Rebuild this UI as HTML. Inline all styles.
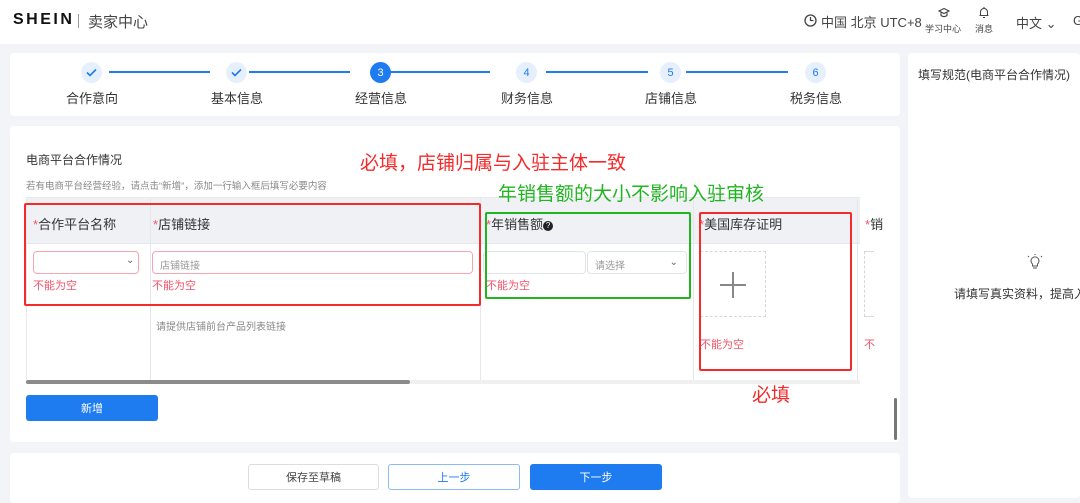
<!DOCTYPE html>
<html><head><meta charset="utf-8"><style>
*{box-sizing:border-box;margin:0;padding:0}
body{width:1080px;height:498px;overflow:hidden;background:#f2f4f8;font-family:"Liberation Sans","Noto Sans CJK SC",sans-serif;position:relative;color:#333}
.a{position:absolute}
.hdr{left:0;top:0;width:1080px;height:44px;background:#fff}
.card{background:#fff;border-radius:4px}
.circ{width:21px;height:21px;border-radius:50%;background:#e6f0fd;color:#1f7bf0;font-size:11px;display:flex;align-items:center;justify-content:center}
.line{height:2px;background:#1f7bf0;top:71px}
.lbl{font-size:13px;color:#333;top:88px;width:80px;text-align:center}
.err{color:#f2556b;font-size:11px}
.ann{font-size:19px}
.btn{height:26px;border-radius:3px;font-size:11px;display:flex;align-items:center;justify-content:center}
</style></head><body>
<div class="a hdr"></div>
<div class="a" style="left:13px;top:11px;font-size:16px;font-weight:bold;letter-spacing:2.5px;color:#111">SHEIN</div>
<div class="a" style="left:78px;top:14px;width:1px;height:14px;background:#999"></div>
<div class="a" style="left:88px;top:11px;font-size:15px;color:#444">卖家中心</div>
<svg class="a" style="left:804px;top:14px" width="13" height="13" viewBox="0 0 13 13"><circle cx="6.5" cy="6.5" r="5.5" fill="none" stroke="#444" stroke-width="1.3"/><path d="M6.5 3v3.5h3" fill="none" stroke="#444" stroke-width="1.3"/></svg>
<div class="a" style="left:821px;top:12px;font-size:13px;color:#444">中国 北京 UTC+8</div>
<svg class="a" style="left:938px;top:7px" width="12" height="11" viewBox="0 0 12 11"><path d="M1 4l5-2.5 5 2.5-5 2.5z M3 5v3.5c2 1.5 4 1.5 6 0V5" fill="none" stroke="#444" stroke-width="1.1"/></svg>
<div class="a" style="left:925px;top:22px;font-size:9px;color:#444">学习中心</div>
<svg class="a" style="left:978px;top:6px" width="12" height="13" viewBox="0 0 12 13"><path d="M2.5 9.5V6a3.5 3.5 0 017 0v3.5H2.5h7M1.5 9.5h9M5 11.5h2M6 1v1.2" fill="none" stroke="#444" stroke-width="1.1"/></svg>
<div class="a" style="left:975px;top:22px;font-size:9px;color:#444">消息</div>
<div class="a" style="left:1016px;top:13px;font-size:13px;color:#444">中文 ⌄</div>
<div class="a" style="left:1073px;top:13px;font-size:13px;color:#444">G</div>

<div class="a card" style="left:10px;top:53px;width:890px;height:63px"></div>
<div class="a circ" style="left:81px;top:62px"><svg width="11" height="9" viewBox="0 0 11 9"><path d="M1 4.5l3 3L10 1.5" fill="none" stroke="#1f7bf0" stroke-width="1.6"/></svg></div>
<div class="a circ" style="left:226px;top:62px"><svg width="11" height="9" viewBox="0 0 11 9"><path d="M1 4.5l3 3L10 1.5" fill="none" stroke="#1f7bf0" stroke-width="1.6"/></svg></div>
<div class="a circ" style="left:370px;top:62px;background:#1f7bf0;color:#fff">3</div>
<div class="a circ" style="left:516px;top:62px">4</div>
<div class="a circ" style="left:660px;top:62px">5</div>
<div class="a circ" style="left:805px;top:62px">6</div>
<div class="a line" style="left:109px;width:101px"></div>
<div class="a line" style="left:249px;width:101px"></div>
<div class="a line" style="left:389px;width:101px"></div>
<div class="a line" style="left:546px;width:102px"></div>
<div class="a line" style="left:686px;width:102px"></div>
<div class="a lbl" style="left:52px">合作意向</div>
<div class="a lbl" style="left:197px">基本信息</div>
<div class="a lbl" style="left:341px">经营信息</div>
<div class="a lbl" style="left:487px">财务信息</div>
<div class="a lbl" style="left:631px">店铺信息</div>
<div class="a lbl" style="left:776px">税务信息</div>

<div class="a card" style="left:908px;top:53px;width:172px;height:445px"></div>
<div class="a" style="left:918px;top:66px;font-size:12px;color:#333">填写规范(电商平台合作情况)</div>
<svg class="a" style="left:1026px;top:253px" width="18" height="18" viewBox="0 0 18 18"><path d="M6.5 11a4 4 0 115 0v2h-5z M7 15h4 M9 2V1 M3 4l-1-1 M15 4l1-1" fill="none" stroke="#555" stroke-width="1"/></svg>
<div class="a" style="left:954px;top:285px;font-size:12px;color:#333;white-space:nowrap">请填写真实资料，提高入</div>

<div class="a card" style="left:10px;top:126px;width:890px;height:316px"></div>
<div class="a" style="left:26px;top:151px;font-size:12px;color:#333">电商平台合作情况</div>
<div class="a" style="left:26px;top:178px;font-size:9.5px;color:#888">若有电商平台经营经验，请点击“新增”，添加一行输入框后填写必要内容</div>

<div class="a" style="left:26px;top:197px;width:834px;height:184px;border:1px solid #e8e9ee;border-right:none"></div>
<div class="a" style="left:27px;top:198px;width:833px;height:46px;background:#f0f1f5;border-bottom:1px solid #e6e7ec"></div>
<div class="a" style="left:150px;top:198px;width:1px;height:182px;background:#e6e7ec"></div>
<div class="a" style="left:480px;top:198px;width:1px;height:182px;background:#e6e7ec"></div>
<div class="a" style="left:693px;top:198px;width:1px;height:182px;background:#e6e7ec"></div>
<div class="a" style="left:857px;top:198px;width:1px;height:182px;background:#e6e7ec"></div>
<div class="a" style="left:33px;top:214px;font-size:13px"><span style="color:#f2556b">*</span>合作平台名称</div>
<div class="a" style="left:153px;top:214px;font-size:13px"><span style="color:#f2556b">*</span>店铺链接</div>
<div class="a" style="left:486px;top:214px;font-size:13px"><span style="color:#f2556b">*</span>年销售额<span style="display:inline-block;width:10px;height:10px;border-radius:50%;background:#222;color:#fff;font-size:8px;line-height:10px;text-align:center;vertical-align:1px">?</span></div>
<div class="a" style="left:699px;top:214px;font-size:13px"><span style="color:#f2556b">*</span>美国库存证明</div>
<div class="a" style="left:865px;top:214px;font-size:13px"><span style="color:#f2556b">*</span>销</div>

<div class="a" style="left:33px;top:251px;width:106px;height:23px;border:1px solid #f7a4b0;border-radius:4px"></div>
<div class="a" style="left:126px;top:255px;font-size:10px;color:#666">⌄</div>
<div class="a" style="left:152px;top:251px;width:321px;height:23px;border:1px solid #f7a4b0;border-radius:4px;font-size:10px;color:#999;padding:5px 7px">店铺链接</div>
<div class="a err" style="left:33px;top:277px">不能为空</div>
<div class="a err" style="left:152px;top:277px">不能为空</div>
<div class="a" style="left:156px;top:318px;font-size:10px;color:#888">请提供店铺前台产品列表链接</div>
<div class="a" style="left:483px;top:251px;width:103px;height:23px;border:1px solid #e3e4e8;border-radius:4px"></div>
<div class="a" style="left:587px;top:251px;width:100px;height:23px;border:1px solid #e3e4e8;border-radius:4px;font-size:10px;color:#999;padding:5px 7px">请选择<span style="position:absolute;right:8px;color:#666">⌄</span></div>
<div class="a err" style="left:486px;top:277px">不能为空</div>
<div class="a" style="left:700px;top:251px;width:66px;height:66px;border:1px dashed #d6d7dc"></div>
<div class="a" style="left:720px;top:284px;width:26px;height:1.5px;background:#888"></div>
<div class="a" style="left:732px;top:272px;width:1.5px;height:26px;background:#888"></div>
<div class="a err" style="left:700px;top:336px">不能为空</div>
<div class="a" style="left:864px;top:251px;width:10px;height:66px;border:1px dashed #d6d7dc;border-right:none"></div>
<div class="a err" style="left:864px;top:336px">不</div>
<div class="a" style="left:26px;top:380px;width:834px;height:4px;background:#f0f0f0"></div>
<div class="a" style="left:26px;top:380px;width:384px;height:4px;background:#8a8a8a;border-radius:2px"></div>
<div class="a" style="left:894px;top:398px;width:3px;height:42px;background:#777;border-radius:2px"></div>

<div class="a btn" style="left:26px;top:395px;width:132px;height:26px;background:#1f7bf0;color:#fff">新增</div>

<div class="a card" style="left:10px;top:453px;width:890px;height:50px"></div>
<div class="a btn" style="left:248px;top:464px;width:131px;border:1px solid #ddd;color:#444">保存至草稿</div>
<div class="a btn" style="left:388px;top:464px;width:132px;border:1px solid #8bbcf8;color:#1f7bf0">上一步</div>
<div class="a btn" style="left:530px;top:464px;width:132px;background:#1f7bf0;color:#fff">下一步</div>

<div class="a ann" style="left:360px;top:148px;color:#f52a2a">必填，店铺归属与入驻主体一致</div>
<div class="a ann" style="left:498px;top:179px;color:#22b522">年销售额的大小不影响入驻审核</div>
<div class="a ann" style="left:752px;top:380px;color:#f52a2a">必填</div>
<div class="a" style="left:24px;top:203px;width:457px;height:103px;border:2px solid #f52a2a;border-radius:2px"></div>
<div class="a" style="left:485px;top:212px;width:206px;height:87px;border:2px solid #22b522;border-radius:2px"></div>
<div class="a" style="left:699px;top:212px;width:153px;height:159px;border:2px solid #f52a2a;border-radius:2px"></div>
</body></html>
